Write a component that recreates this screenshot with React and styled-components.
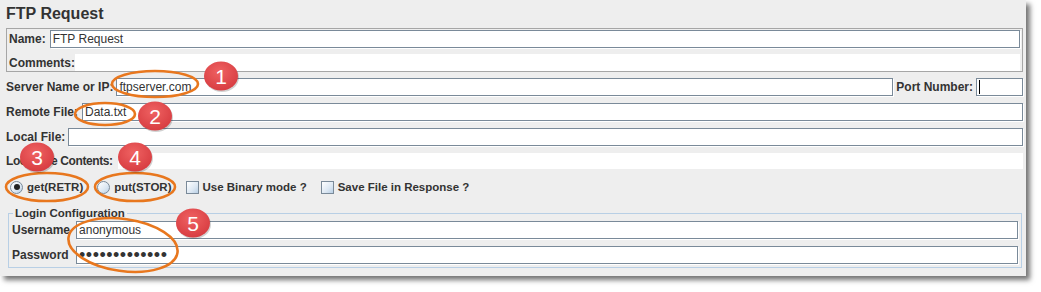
import styled, { createGlobalStyle } from 'styled-components';

const GlobalStyle = createGlobalStyle`
  html, body {
    margin: 0;
    padding: 0;
    background: #ffffff;
  }
  body {
    font-family: "Liberation Sans", Arial, sans-serif;
    font-size: 12px;
    color: #333333;
  }
`;

const Stage = styled.div`
  position: relative;
  width: 1041px;
  height: 292px;
`;

const Panel = styled.div`
  width: 1026px;
  height: 276px;
  box-sizing: border-box;
  padding: 0 3px 0 6px;
  background: #eeeeee;
  box-shadow: 4px 4px 5px rgba(0, 0, 0, 0.55);
  display: flex;
  flex-direction: column;
`;

const Title = styled.div`
  height: 28px;
  line-height: 28px;
  font-size: 16px;
  font-weight: bold;
  color: #333333;
`;

const NameBox = styled.div`
  border: 1px solid #a6a6a6;
  padding: 1px 2px 0 2px;
  display: flex;
  flex-direction: column;
  gap: 6px;
`;

const Row = styled.div`
  display: flex;
  align-items: center;
  gap: ${(p) => (p.$gap != null ? p.$gap : 3)}px;
  margin-top: ${(p) => p.$top || 0}px;
  height: ${(p) => p.$height || 18}px;
`;

const Label = styled.span`
  font-weight: bold;
  color: #333333;
  white-space: nowrap;
  letter-spacing: ${(p) => p.$tight || 0}px;
`;

const Field = styled.div`
  position: relative;
  flex: ${(p) => (p.$width ? `0 0 ${p.$width}px` : '1 1 auto')};
  box-sizing: border-box;
  height: 18px;
  border: 1px solid #7a8a99;
  box-shadow: 1px 1px 0 #ffffff;
  background: #ffffff;
  padding: 0 2px;
  line-height: 16px;
  color: #333333;
  white-space: nowrap;
  overflow: hidden;
`;

const Caret = styled.span`
  display: inline-block;
  width: 1px;
  height: 14px;
  margin-top: 1px;
  background: #000000;
  vertical-align: top;
`;

const TextArea = styled.div`
  flex: 1 1 auto;
  align-self: stretch;
  background: #ffffff;
`;

const Dots = styled.span`
  font-size: 18px;
  letter-spacing: 0.5px;
  line-height: 16px;
  color: #333333;
`;

const OptionRow = styled.div`
  display: flex;
  align-items: center;
  height: 20px;
  margin-top: 8px;
  padding-left: 4px;
`;

const Option = styled.label`
  display: flex;
  align-items: center;
  gap: 4px;
  margin-right: 14px;
  font-size: 11.5px;
  font-weight: bold;
  color: #333333;
`;

const Radio = styled.span`
  position: relative;
  width: 11px;
  height: 11px;
  border-radius: 50%;
  border: 1px solid #7a8a99;
  background: linear-gradient(135deg, #ffffff 0%, #dde8f3 60%, #b8cfe5 100%);
  &::after {
    content: '';
    display: ${(p) => (p.$checked ? 'block' : 'none')};
    position: absolute;
    left: 2.5px;
    top: 2.5px;
    width: 6px;
    height: 6px;
    border-radius: 50%;
    background: #222222;
  }
`;

const Check = styled.span`
  width: 11px;
  height: 11px;
  border: 1px solid #7a8a99;
  background: linear-gradient(135deg, #ffffff 0%, #dde8f3 60%, #b8cfe5 100%);
`;

const Fieldset = styled.fieldset`
  margin: 9px 1px 0 2px;
  padding: 1px 3px 3px 3px;
  border: 1px solid #b8cfe5;
  min-width: 0;
`;

const Legend = styled.legend`
  margin-left: 1px;
  padding: 0 2px;
  font-size: 11.5px;
  font-weight: bold;
  color: #333333;
  line-height: 14px;
`;

const LoginGrid = styled.div`
  display: grid;
  grid-template-columns: auto 1fr;
  column-gap: 6px;
  row-gap: 7px;
  align-items: center;
`;

const Overlay = styled.svg`
  position: absolute;
  left: 0;
  top: 0;
  pointer-events: none;
`;

const marks = [
  { n: 1, cx: 221, cy: 76 },
  { n: 2, cx: 155, cy: 116 },
  { n: 3, cx: 37, cy: 157 },
  { n: 4, cx: 135, cy: 157 },
  { n: 5, cx: 193, cy: 223 },
];

const rings = [
  { cx: 155, cy: 84, rx: 43, ry: 13, rot: 0 },
  { cx: 105, cy: 114, rx: 30, ry: 11, rot: 0 },
  { cx: 47, cy: 187, rx: 41, ry: 14, rot: 0 },
  { cx: 135, cy: 187, rx: 40, ry: 14, rot: 0 },
  { cx: 123, cy: 245, rx: 55, ry: 26, rot: 8 },
];

function Annotations() {
  return (
    <Overlay width="1041" height="292" viewBox="0 0 1041 292">
      <defs>
        <radialGradient id="badge" cx="45%" cy="35%" r="70%">
          <stop offset="0%" stopColor="#ef6262" />
          <stop offset="100%" stopColor="#d63a3f" />
        </radialGradient>
      </defs>
      {rings.map((r, i) => (
        <ellipse
          key={i}
          cx={r.cx}
          cy={r.cy}
          rx={r.rx}
          ry={r.ry}
          fill="none"
          stroke="#e8771e"
          strokeWidth="2.6"
          transform={`rotate(${r.rot} ${r.cx} ${r.cy})`}
        />
      ))}
      {marks.map((m) => (
        <g key={m.n}>
          <ellipse cx={m.cx + 1} cy={m.cy + 1.5} rx="17" ry="14.5" fill="rgba(0,0,0,0.18)" />
          <ellipse cx={m.cx} cy={m.cy} rx="17" ry="14.5" fill="url(#badge)" />
          <text
            x={m.cx}
            y={m.cy + 7.5}
            textAnchor="middle"
            fontFamily="Liberation Sans, Arial, sans-serif"
            fontSize="21"
            fill="#ffffff"
          >
            {m.n}
          </text>
        </g>
      ))}
    </Overlay>
  );
}

export default function App() {
  return (
    <Stage>
      <GlobalStyle />
      <Panel>
        <Title>FTP Request</Title>
        <NameBox>
          <Row $gap={4}>
            <Label>Name:</Label>
            <Field>FTP Request</Field>
          </Row>
          <Row $gap={0} $height={17}>
            <Label>Comments:</Label>
            <TextArea />
          </Row>
        </NameBox>
        <Row $top={6}>
          <Label>Server Name or IP:</Label>
          <Field>ftpserver.com</Field>
          <Label>Port Number:</Label>
          <Field $width={47}>
            <Caret />
          </Field>
        </Row>
        <Row $top={7} $gap={4}>
          <Label>Remote File:</Label>
          <Field>Data.txt</Field>
        </Row>
        <Row $top={7}>
          <Label>Local File:</Label>
          <Field />
        </Row>
        <Row $top={7} $height={16} $gap={5}>
          <Label $tight={-0.4}>Local File Contents:</Label>
          <TextArea />
        </Row>
        <OptionRow>
          <Option>
            <Radio $checked />
            get(RETR)
          </Option>
          <Option>
            <Radio />
            put(STOR)
          </Option>
          <Option>
            <Check />
            Use Binary mode ?
          </Option>
          <Option>
            <Check />
            Save File in Response ?
          </Option>
        </OptionRow>
        <Fieldset>
          <Legend>Login Configuration</Legend>
          <LoginGrid>
            <Label>Username</Label>
            <Field>anonymous</Field>
            <Label>Password</Label>
            <Field>
              <Dots>•••••••••••••</Dots>
            </Field>
          </LoginGrid>
        </Fieldset>
      </Panel>
      <Annotations />
    </Stage>
  );
}
